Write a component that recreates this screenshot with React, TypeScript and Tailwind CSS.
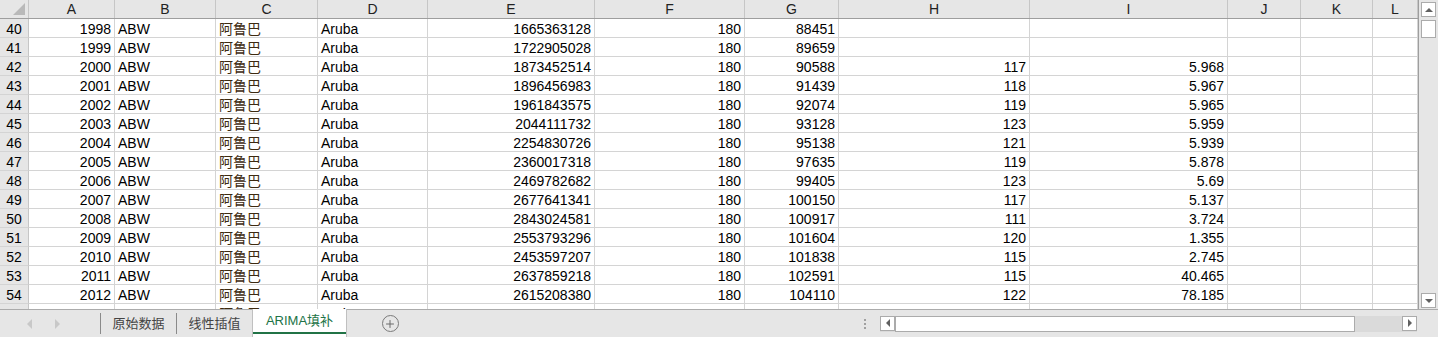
import { Plus } from "lucide-react"

type Row = {
  n: number
  year: string
  f: string
  e: string
  g: string
  h: string
  i: string
}

const rows: Row[] = [
  { n: 40, year: "1998", e: "1665363128", f: "180", g: "88451", h: "", i: "" },
  { n: 41, year: "1999", e: "1722905028", f: "180", g: "89659", h: "", i: "" },
  { n: 42, year: "2000", e: "1873452514", f: "180", g: "90588", h: "117", i: "5.968" },
  { n: 43, year: "2001", e: "1896456983", f: "180", g: "91439", h: "118", i: "5.967" },
  { n: 44, year: "2002", e: "1961843575", f: "180", g: "92074", h: "119", i: "5.965" },
  { n: 45, year: "2003", e: "2044111732", f: "180", g: "93128", h: "123", i: "5.959" },
  { n: 46, year: "2004", e: "2254830726", f: "180", g: "95138", h: "121", i: "5.939" },
  { n: 47, year: "2005", e: "2360017318", f: "180", g: "97635", h: "119", i: "5.878" },
  { n: 48, year: "2006", e: "2469782682", f: "180", g: "99405", h: "123", i: "5.69" },
  { n: 49, year: "2007", e: "2677641341", f: "180", g: "100150", h: "117", i: "5.137" },
  { n: 50, year: "2008", e: "2843024581", f: "180", g: "100917", h: "111", i: "3.724" },
  { n: 51, year: "2009", e: "2553793296", f: "180", g: "101604", h: "120", i: "1.355" },
  { n: 52, year: "2010", e: "2453597207", f: "180", g: "101838", h: "115", i: "2.745" },
  { n: 53, year: "2011", e: "2637859218", f: "180", g: "102591", h: "115", i: "40.465" },
  { n: 54, year: "2012", e: "2615208380", f: "180", g: "104110", h: "122", i: "78.185" },
  { n: 55, year: "2013", e: "2725880456", f: "180", g: "105139", h: "120", i: "81.221" },
]

const cols = ["A", "B", "C", "D", "E", "F", "G", "H", "I", "J", "K", "L"]

const gridCols =
  "grid grid-cols-[29px_86px_101px_102px_110px_167px_150px_94px_191px_198px_73px_72px_1fr]"

const cell = "h-[19px] border-r border-b border-[#d4d4d4] overflow-hidden whitespace-nowrap pt-[2px] leading-[16px]"
const num = `${cell} text-right pr-[3px]`
const txt = `${cell} pl-[3px]`

function HeaderRow() {
  return (
    <div className={`${gridCols} h-[19px] bg-[#e6e6e6] border-b border-[#9e9e9e]`}>
      <div className="relative border-r border-[#c6c6c6]">
        <div className="absolute right-[3px] bottom-[3px] h-0 w-0 [border-bottom:12px_solid_#b9b9b9] [border-left:12px_solid_transparent]" />
      </div>
      {cols.map((c) => (
        <div key={c} className="border-r border-[#c6c6c6] text-center leading-[18px] text-[#222]">
          {c}
        </div>
      ))}
    </div>
  )
}

function DataRow({ r }: { r: Row }) {
  return (
    <div className={gridCols}>
      <div className={`${cell} bg-[#e6e6e6] border-r-[#c6c6c6] border-b-[#d4d4d4] text-center`}>{r.n}</div>
      <div className={num}>{r.year}</div>
      <div className={txt}>ABW</div>
      <div className={`${txt} text-[#3d2a10]`}>阿鲁巴</div>
      <div className={txt}>Aruba</div>
      <div className={num}>{r.e}</div>
      <div className={num}>{r.f}</div>
      <div className={num}>{r.g}</div>
      <div className={num}>{r.h}</div>
      <div className={num}>{r.i}</div>
      <div className={cell} />
      <div className={cell} />
      <div className={cell} />
    </div>
  )
}

function ScrollBtn({ dir }: { dir: "up" | "down" | "left" | "right" }) {
  const tri = {
    up: "border-l-[4px] border-r-[4px] border-b-[4px] border-l-transparent border-r-transparent border-b-[#606060]",
    down: "border-l-[4px] border-r-[4px] border-t-[4px] border-l-transparent border-r-transparent border-t-[#606060]",
    left: "border-t-[4px] border-b-[4px] border-r-[4px] border-t-transparent border-b-transparent border-r-[#606060]",
    right: "border-t-[4px] border-b-[4px] border-l-[4px] border-t-transparent border-b-transparent border-l-[#606060]",
  }[dir]
  return (
    <div className="flex h-[15px] w-[15px] shrink-0 items-center justify-center border border-[#ababab] bg-white">
      <div className={`h-0 w-0 ${tri}`} />
    </div>
  )
}

function Arrow({ dir }: { dir: "left" | "right" }) {
  return dir === "left" ? (
    <div className="h-0 w-0 border-t-[5px] border-b-[5px] border-r-[5px] border-t-transparent border-b-transparent border-r-[#c8c8c8]" />
  ) : (
    <div className="h-0 w-0 border-t-[5px] border-b-[5px] border-l-[5px] border-t-transparent border-b-transparent border-l-[#c8c8c8]" />
  )
}

export default function App() {
  return (
    <div
      className="flex h-[337px] w-[1438px] flex-col overflow-hidden bg-white text-[14px] text-black"
      style={{ fontFamily: '"Liberation Sans", Arial, "Noto Sans CJK SC", sans-serif' }}
    >
      <div className="flex h-[309px] shrink-0">
        <div className="h-full w-[1419px] shrink-0 overflow-hidden border-r border-[#9e9e9e]">
          <HeaderRow />
          {rows.map((r) => (
            <DataRow key={r.n} r={r} />
          ))}
        </div>
        <div className="flex flex-1 flex-col items-center bg-[#e6e6e6] pt-[2px] pb-[1px]">
          <ScrollBtn dir="up" />
          <div className="mt-[3px] h-[18px] w-[15px] border border-[#ababab] bg-white" />
          <div className="flex-1" />
          <ScrollBtn dir="down" />
        </div>
      </div>

      <div className="flex h-[28px] shrink-0 items-stretch border-t border-[#ababab] bg-[#e6e6e6] text-[#444]">
        <div className="flex w-[100px] items-center">
          <div className="ml-[27px] w-[28px]">
            <Arrow dir="left" />
          </div>
          <Arrow dir="right" />
        </div>
        <div className="flex items-center">
          <div className="h-[21px] w-px bg-[#8a8a8a]" />
        </div>
        <div className="flex w-[75px] items-center justify-center text-[13px]">原始数据</div>
        <div className="flex items-center">
          <div className="h-[21px] w-px bg-[#8a8a8a]" />
        </div>
        <div className="flex w-[75px] items-center justify-center text-[13px]">线性插值</div>
        <div className="-mt-px flex w-[95px] items-start justify-center border-x border-[#c0c0c0] bg-white">
          <div className="flex h-[25px] w-full items-center justify-center border-b-2 border-[#217346] text-[13px] text-[#217346]">
            ARIMA填补
          </div>
        </div>
        <div className="flex w-[84px] items-center justify-center">
          <div className="ml-[2px] flex h-[17px] w-[17px] items-center justify-center rounded-full border border-[#7a7a7a]">
            <Plus size={12} strokeWidth={2} color="#6a6a6a" />
          </div>
        </div>
        <div className="flex-1" />
        <div className="flex w-[30px] flex-col items-center justify-center gap-[2px]">
          <div className="h-[2px] w-[2px] bg-[#a0a0a0]" />
          <div className="h-[2px] w-[2px] bg-[#a0a0a0]" />
          <div className="h-[2px] w-[2px] bg-[#a0a0a0]" />
        </div>
        <div className="flex w-[558px] items-center pr-[21px]">
          <div className="flex h-[16px] w-full items-stretch bg-[#dadada]">
            <ScrollBtn dir="left" />
            <div className="w-[460px] border border-[#ababab] bg-white" />
            <div className="flex-1" />
            <ScrollBtn dir="right" />
          </div>
        </div>
      </div>
    </div>
  )
}
